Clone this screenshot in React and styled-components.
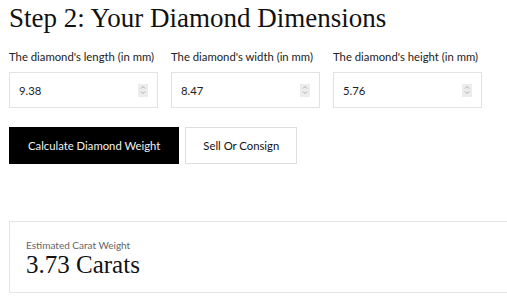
import React, { useState } from 'react';
import styled, { createGlobalStyle } from 'styled-components';

const GlobalStyle = createGlobalStyle`
    body {
        margin: 0;
        background: #fff;
        overflow: hidden;
        font-family: 'Lato', 'Open Sans', sans-serif;
        color: #111;
    }
`;

const Page = styled.section`
    padding: 0 0 0 9px;
    width: 530px;
`;

const Title = styled.h2`
    font-family: 'Liberation Serif', serif;
    font-weight: 400;
    font-size: 27px;
    line-height: 32px;
    margin: 0;
    padding-top: 2px;
    color: #111;
`;

const Fields = styled.div`
    display: flex;
    gap: 13px;
    margin-top: 15px;
`;

const Field = styled.label`
    display: flex;
    flex-direction: column;
    width: 149px;
`;

const LabelText = styled.span`
    font-size: 11.3px;
    line-height: 16px;
    color: #222;
    white-space: nowrap;
`;

const InputBox = styled.div`
    margin-top: 7px;
    height: 36px;
    box-sizing: border-box;
    border: 1px solid #e2e2e2;
    display: flex;
    align-items: center;
    justify-content: space-between;
    padding: 0 9px 0 9px;
`;

const Input = styled.input`
    border: none;
    outline: none;
    font-family: inherit;
    font-size: 11.3px;
    color: #222;
    width: 90px;
    padding: 0;
    margin-top: 1px;
    background: transparent;
`;

const Spinner = styled.span`
    width: 10px;
    height: 13px;
    background: #ececec;
    display: flex;
    align-items: center;
    justify-content: center;
`;

const Buttons = styled.div`
    display: flex;
    gap: 6px;
    margin-top: 19px;
`;

const Button = styled.button`
    height: 37px;
    box-sizing: border-box;
    font-family: inherit;
    font-size: 11.3px;
    padding: 0 ${props => props.dark ? '18px' : '17px'};
    cursor: pointer;
    border: 1px solid ${props => props.dark ? '#000' : '#dedede'};
    background: ${props => props.dark ? '#000' : '#fff'};
    color: ${props => props.dark ? '#f2f2f2' : '#111'};
`;

const Result = styled.div`
    margin-top: 57px;
    height: 72px;
    box-sizing: border-box;
    border: 1px solid #e4e4e4;
    padding: 17px 0 0 16px;
`;

const ResultLabel = styled.div`
    font-size: 10px;
    color: #666;
    line-height: 12px;
`;

const ResultValue = styled.div`
    font-family: 'Liberation Serif', serif;
    font-size: 25px;
    line-height: 28px;
    color: #111;
`;

const SpinIcon = () => (
    <svg width="6" height="10" viewBox="0 0 6 10">
        <path d="M1 3.5 L3 1.5 L5 3.5 M1 6.5 L3 8.5 L5 6.5" fill="none" stroke="#9a9a9a" strokeWidth="0.8" />
    </svg>
);

const fields = [
    { key: 'length', label: "The diamond's length (in mm)", value: '9.38' },
    { key: 'width', label: "The diamond's width (in mm)", value: '8.47' },
    { key: 'height', label: "The diamond's height (in mm)", value: '5.76' },
];

const App = () => {
    const [values, setValues] = useState(
        fields.reduce((acc, f) => ({ ...acc, [f.key]: f.value }), {})
    );

    return (
        <Page>
            <GlobalStyle />
            <Title>Step 2: Your Diamond Dimensions</Title>
            <Fields>
                {fields.map(f => (
                    <Field key={f.key}>
                        <LabelText>{f.label}</LabelText>
                        <InputBox>
                            <Input
                                type="text"
                                value={values[f.key]}
                                onChange={(e) => setValues({ ...values, [f.key]: e.target.value })} />
                            <Spinner><SpinIcon /></Spinner>
                        </InputBox>
                    </Field>
                ))}
            </Fields>
            <Buttons>
                <Button dark>Calculate Diamond Weight</Button>
                <Button>Sell Or Consign</Button>
            </Buttons>
            <Result>
                <ResultLabel>Estimated Carat Weight</ResultLabel>
                <ResultValue>3.73 Carats</ResultValue>
            </Result>
        </Page>
    );
};

export default App;
